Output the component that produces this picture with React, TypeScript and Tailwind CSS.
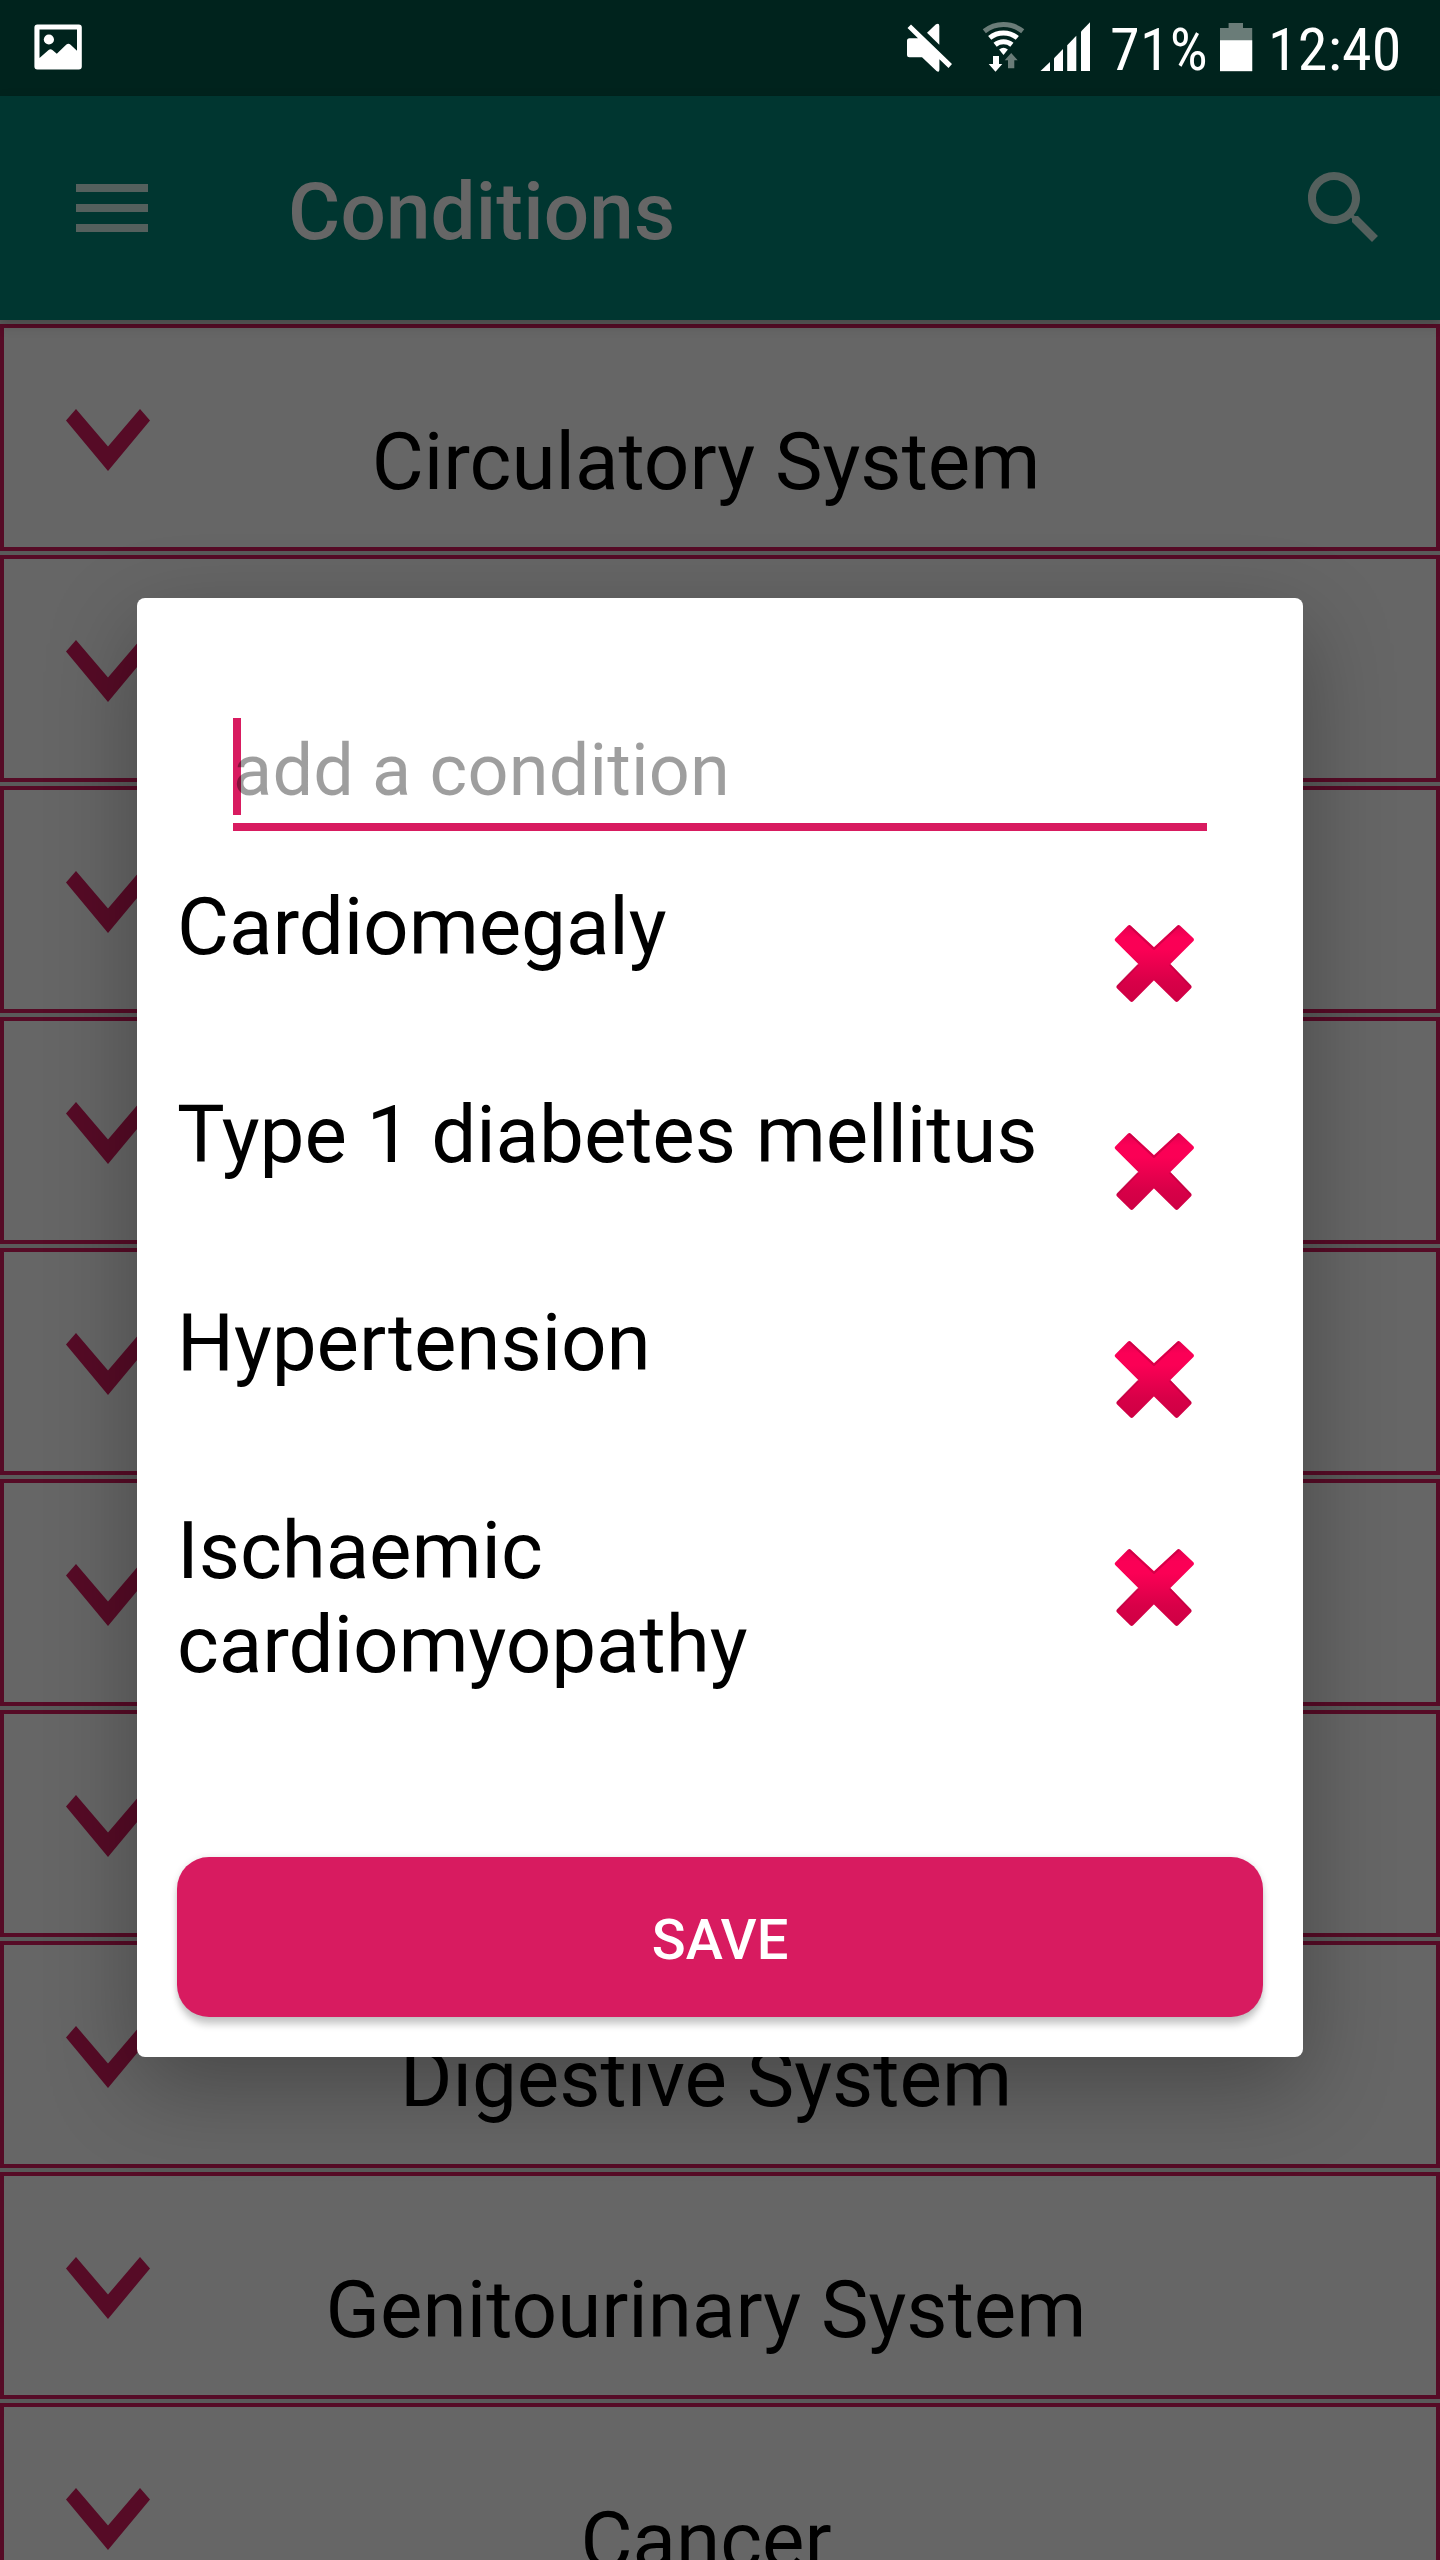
type Section = { id: number; label: string };

const sections: Section[] = [
  { id: 1, label: "Circulatory System" },
  { id: 2, label: "" },
  { id: 3, label: "" },
  { id: 4, label: "" },
  { id: 5, label: "" },
  { id: 6, label: "" },
  { id: 7, label: "" },
  { id: 8, label: "Digestive System" },
  { id: 9, label: "Genitourinary System" },
  { id: 10, label: "Cancer" },
];

const conditions = [
  "Cardiomegaly",
  "Type 1 diabetes mellitus",
  "Hypertension",
  "Ischaemic cardiomyopathy",
];

function PictureIcon() {
  return (
    <svg className="h-[46px] w-[48px] shrink-0" viewBox="34 23.5 48 46">
      <path
        fill="#fff"
        fillRule="evenodd"
        d="M37.400 24H78.800Q81.800 24 81.800 27V66Q81.800 69 78.800 69H37.400Q34.400 69 34.400 66V27Q34.400 24 37.400 24ZM39.500 29V57.500L48.600 49.500Q50.500 47.800 52.400 49.600L56.800 53.200L66.400 44Q68.500 42.200 70.600 44.200L77 50.200V29Z"
      />
      <circle cx="48.900" cy="39" r="5.100" fill="#fff" />
    </svg>
  );
}

function MuteIcon() {
  return (
    <svg className="h-[50px] w-[46px] shrink-0" viewBox="907 22.500 46 50" fill="#fff">
      <path d="M927 32.300 936 23.800Q939.300 22 939.300 25.500V44.300Z" />
      <path d="M907.500 27.500 911 24 952 63.500 948.500 67.400 939.400 58.800V69Q939.400 72.500 936.500 70.600L922 56.700H909.500Q907 56.700 907 54.200V40.200Q907 37.700 909.500 37.700H918Z" />
    </svg>
  );
}

function WifiIcon() {
  return (
    <svg className="h-[52px] w-[43px] shrink-0" viewBox="982 21 43 52" fill="none">
      <path d="M984.300 31.300A30.500 30.500 0 0 1 1022.700 31.300" stroke="#6a7c78" strokeWidth="5" />
      <path d="M989.700 37.900A22 22 0 0 1 1017.300 37.900" stroke="#fff" strokeWidth="5" />
      <path d="M995.100 44.700A13.300 13.300 0 0 1 1011.900 44.700" stroke="#fff" strokeWidth="5" />
      <path d="M1003.500 55 999.100 49.600A7 7 0 0 1 1007.900 49.600Z" fill="#fff" />
      <path d="M993 56H999V64H1002.300L995.500 71.700 988.700 64H993Z" fill="#fff" />
      <path d="M1011.200 53 1017.700 60.300H1014.300V68.300H1008V60.300H1004.700Z" fill="#6a7c78" />
    </svg>
  );
}

function SignalIcon() {
  return (
    <svg className="h-[50px] w-[51px] shrink-0" viewBox="1040 22 51 50" fill="#fff">
      <path d="M1040.500 71 1050 62V71Z" />
      <path d="M1054 71V58.300L1063 49V71Z" />
      <path d="M1067.200 71V45.300L1076.300 35.800V71Z" />
      <path d="M1081 71V31.500L1090 22.300V71Z" />
    </svg>
  );
}

function BatteryIcon() {
  return (
    <svg className="h-[50px] w-[33px] shrink-0" viewBox="1220 22 33 50">
      <path d="M1220 28H1228.600V23H1243V28H1252.200V71.600H1220Z" fill="#6a7c78" />
      <path d="M1220 40.300H1252.200V71H1220Z" fill="#fff" />
    </svg>
  );
}

function StatusBar() {
  return (
    <div className="flex h-[96px] shrink-0 items-start bg-[#00231d] pl-[34px] pr-[39px] text-[60px] leading-[71px] text-white">
      <div className="pt-[23.5px]">
        <PictureIcon />
      </div>
      <div className="ml-auto flex items-start">
        <div className="pt-[22.5px]">
          <MuteIcon />
        </div>
        <div className="ml-[29px] pt-[21px]">
          <WifiIcon />
        </div>
        <div className="ml-[15px] pt-[22px]">
          <SignalIcon />
        </div>
        <span className="ml-[19px] mt-[14px] w-[98px] whitespace-nowrap tracking-[0.3px] [font-stretch:75%]">
          71%
        </span>
        <div className="ml-[12px] pt-[22px]">
          <BatteryIcon />
        </div>
        <span className="ml-[15px] mt-[14px] w-[133px] whitespace-nowrap tracking-[0.25px] [font-stretch:75%]">
          12:40
        </span>
      </div>
    </div>
  );
}

function AppBar() {
  return (
    <header className="relative z-10 flex h-[224px] shrink-0 items-center bg-[#003630] pl-[64px] pr-[48px] shadow-[0_5px_12px_rgba(0,0,0,0.2)]">
      <svg className="size-[96px]" viewBox="0 0 24 24" fill="#54605d">
        <path d="M3 18h18v-2H3v2zm0-5h18v-2H3v2zm0-7v2h18V6H3z" />
      </svg>
      <h1 className="ml-[128px] pt-[8px] text-[80px] font-medium leading-[94px] tracking-[0.15px] text-[#666666]">
        Conditions
      </h1>
      <svg className="ml-auto size-[96px]" viewBox="0 0 24 24" fill="#54605d">
        <path d="M15.500 14h-.79l-.28-.27C15.410 12.590 16 11.110 16 9.500 16 5.910 13.090 3 9.500 3S3 5.910 3 9.500 5.910 16 9.500 16c1.610 0 3.090-.59 4.230-1.570l.27.28v.79l5 4.990L20.490 19l-4.990-5zm-6 0C7.010 14 5 11.990 5 9.500S7.010 5 9.500 5 14 7.010 14 9.500 11.990 14 9.500 14z" />
      </svg>
    </header>
  );
}

function SectionRow({ label }: { label: string }) {
  return (
    <div className="relative h-[227px] shrink-0 border-4 border-[#560b26] bg-[#666666]">
      <svg className="absolute left-[62px] top-[81px] h-[62px] w-[84px]" viewBox="66 409 84 62">
        <path d="M76 409 108 446.500 140 409 150 420.500 108 471 66 420.500Z" fill="#560b26" />
      </svg>
      <p className="pr-[28px] pt-[87px] text-center text-[80px] leading-[94px] text-black">{label}</p>
    </div>
  );
}

function CrossIcon() {
  return (
    <svg className="mt-[44px] h-[79px] w-[81px] shrink-0" viewBox="162 192 243 237">
      <defs>
        <linearGradient id="cross-fill" x1="0" y1="0" x2="0" y2="1">
          <stop offset="0" stopColor="#e80050" />
          <stop offset="0.14" stopColor="#fb0056" />
          <stop offset="0.3" stopColor="#fb0055" />
          <stop offset="0.75" stopColor="#d80048" />
          <stop offset="1" stopColor="#cf0044" />
        </linearGradient>
      </defs>
      <path
        d="M171 239 208 202 282 270 356 202 395 239 322 312 388 381 350 419 282 352 215 419 176 381 244 312Z"
        fill="url(#cross-fill)"
        stroke="url(#cross-fill)"
        strokeWidth="13"
        strokeLinejoin="round"
      />
      <path
        d="M209 199 282 267 355 199M331 316 391 378M233 316 173 378"
        fill="none"
        stroke="#b8003e"
        strokeOpacity="0.55"
        strokeWidth="6"
        strokeLinecap="round"
        strokeLinejoin="round"
      />
    </svg>
  );
}

function ConditionDialog() {
  return (
    <div
      role="dialog"
      className="absolute left-[137px] top-[598px] z-20 flex h-[1459px] w-[1166px] flex-col rounded-[8px] bg-white px-[40px] pb-[40px] pt-[120px] shadow-[0_30px_90px_rgba(0,0,0,0.3)]"
    >
      <div className="relative mx-[56px] h-[113px] border-b-[8px] border-[#d81b60] pt-[10px]">
        <span className="absolute left-0 top-0 h-[97px] w-[8px] bg-[#d81b60]" />
        <p className="relative text-[72px] leading-[85px] tracking-[0.22px] text-black/38">add a condition</p>
      </div>
      <ul className="mt-[49px]">
        {conditions.map((name) => (
          <li key={name} className="flex h-[208px] items-start justify-between pr-[68px]">
            <span className="w-[880px] text-[80px] leading-[94px] tracking-[-0.08px] text-black">{name}</span>
            <CrossIcon />
          </li>
        ))}
      </ul>
      <button
        type="button"
        className="mt-auto h-[160px] w-full rounded-[32px] bg-[#d81b60] pt-[6px] text-[56px] font-medium leading-[66px] text-white shadow-[0_9px_7px_-1px_rgba(0,0,0,0.18),0_1px_7px_rgba(0,0,0,0.13)]"
      >
        SAVE
      </button>
    </div>
  );
}

export default function App() {
  return (
    <div className="relative flex h-[2560px] w-[1440px] flex-col overflow-hidden bg-[#5a5a5a] font-['Roboto',sans-serif]">
      <StatusBar />
      <AppBar />
      <main className="flex flex-col gap-[4px] pt-[4px]">
        {sections.map((section) => (
          <SectionRow key={section.id} label={section.label} />
        ))}
      </main>
      <ConditionDialog />
    </div>
  );
}
